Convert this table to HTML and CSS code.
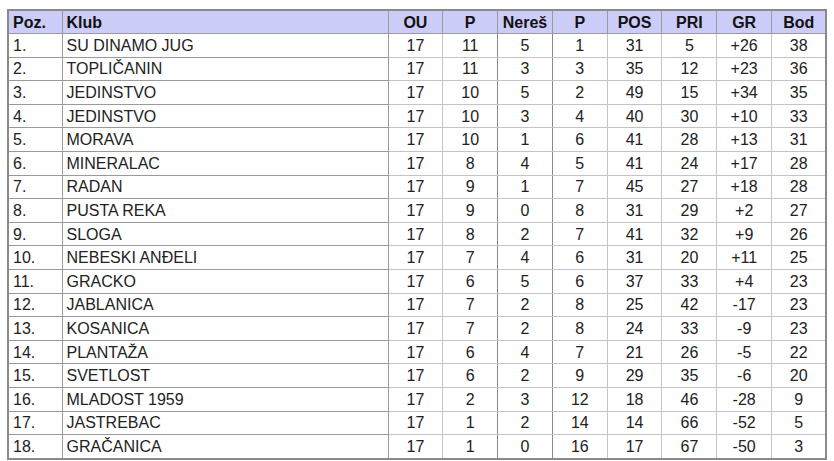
FILE: index.html
```html
<!DOCTYPE html>
<html>
<head>
<meta charset="utf-8">
<link rel="stylesheet" href="styles.css">
</head>
<body>
<table class="standings">
<colgroup>
<col class="c-poz"><col class="c-klub"><col class="c-num"><col class="c-num"><col class="c-num"><col class="c-num"><col class="c-num"><col class="c-num"><col class="c-num"><col class="c-num">
</colgroup>
<thead>
<tr><th class="l">Poz.</th><th class="l">Klub</th><th>OU</th><th>P</th><th>Nereš</th><th>P</th><th>POS</th><th>PRI</th><th>GR</th><th>Bod</th></tr>
</thead>
<tbody>
<tr><td class="l">1.</td><td class="l">SU DINAMO JUG</td><td>17</td><td>11</td><td>5</td><td>1</td><td>31</td><td>5</td><td>+26</td><td>38</td></tr>
<tr><td class="l">2.</td><td class="l">TOPLIČANIN</td><td>17</td><td>11</td><td>3</td><td>3</td><td>35</td><td>12</td><td>+23</td><td>36</td></tr>
<tr><td class="l">3.</td><td class="l">JEDINSTVO</td><td>17</td><td>10</td><td>5</td><td>2</td><td>49</td><td>15</td><td>+34</td><td>35</td></tr>
<tr><td class="l">4.</td><td class="l">JEDINSTVO</td><td>17</td><td>10</td><td>3</td><td>4</td><td>40</td><td>30</td><td>+10</td><td>33</td></tr>
<tr><td class="l">5.</td><td class="l">MORAVA</td><td>17</td><td>10</td><td>1</td><td>6</td><td>41</td><td>28</td><td>+13</td><td>31</td></tr>
<tr><td class="l">6.</td><td class="l">MINERALAC</td><td>17</td><td>8</td><td>4</td><td>5</td><td>41</td><td>24</td><td>+17</td><td>28</td></tr>
<tr><td class="l">7.</td><td class="l">RADAN</td><td>17</td><td>9</td><td>1</td><td>7</td><td>45</td><td>27</td><td>+18</td><td>28</td></tr>
<tr><td class="l">8.</td><td class="l">PUSTA REKA</td><td>17</td><td>9</td><td>0</td><td>8</td><td>31</td><td>29</td><td>+2</td><td>27</td></tr>
<tr><td class="l">9.</td><td class="l">SLOGA</td><td>17</td><td>8</td><td>2</td><td>7</td><td>41</td><td>32</td><td>+9</td><td>26</td></tr>
<tr><td class="l">10.</td><td class="l">NEBESKI ANĐELI</td><td>17</td><td>7</td><td>4</td><td>6</td><td>31</td><td>20</td><td>+11</td><td>25</td></tr>
<tr><td class="l">11.</td><td class="l">GRACKO</td><td>17</td><td>6</td><td>5</td><td>6</td><td>37</td><td>33</td><td>+4</td><td>23</td></tr>
<tr><td class="l">12.</td><td class="l">JABLANICA</td><td>17</td><td>7</td><td>2</td><td>8</td><td>25</td><td>42</td><td>-17</td><td>23</td></tr>
<tr><td class="l">13.</td><td class="l">KOSANICA</td><td>17</td><td>7</td><td>2</td><td>8</td><td>24</td><td>33</td><td>-9</td><td>23</td></tr>
<tr><td class="l">14.</td><td class="l">PLANTAŽA</td><td>17</td><td>6</td><td>4</td><td>7</td><td>21</td><td>26</td><td>-5</td><td>22</td></tr>
<tr><td class="l">15.</td><td class="l">SVETLOST</td><td>17</td><td>6</td><td>2</td><td>9</td><td>29</td><td>35</td><td>-6</td><td>20</td></tr>
<tr><td class="l">16.</td><td class="l">MLADOST 1959</td><td>17</td><td>2</td><td>3</td><td>12</td><td>18</td><td>46</td><td>-28</td><td>9</td></tr>
<tr><td class="l">17.</td><td class="l">JASTREBAC</td><td>17</td><td>1</td><td>2</td><td>14</td><td>14</td><td>66</td><td>-52</td><td>5</td></tr>
<tr><td class="l">18.</td><td class="l">GRAČANICA</td><td>17</td><td>1</td><td>0</td><td>16</td><td>17</td><td>67</td><td>-50</td><td>3</td></tr>
</tbody>
</table>
</body>
</html>
```

FILE: styles.css
```css
html, body {
  margin: 0;
  padding: 0;
  background: #ffffff;
}
body {
  padding: 9px 0 0 7px;
  font-family: "Liberation Sans", Arial, sans-serif;
}
.standings {
  border-collapse: collapse;
  table-layout: fixed;
  width: 819px;
  border: 2px solid #8a8a8a;
  color: #222;
  font-size: 16px;
}
.c-poz { width: 54px; }
.c-klub { width: 326px; }
.c-num { width: 54.8px; }
.standings th,
.standings td {
  border: 1px solid #9a9a9a;
  padding: 1px 4px 0;
  text-align: center;
  line-height: 18px;
  white-space: nowrap;
  overflow: hidden;
}
.standings th {
  background: #ccccf8;
  color: #111;
  font-weight: bold;
  height: 21px;
  font-size: 16px;
}
.standings td {
  height: 21.6px;
}
.standings .l {
  text-align: left;
}
.standings tbody td:nth-child(n+3) {
  border-color: #c4c4c4;
}
.standings tbody td:nth-child(4),
.standings tbody td:nth-child(5) {
  border-right-color: #8a8a8a;
}
```
